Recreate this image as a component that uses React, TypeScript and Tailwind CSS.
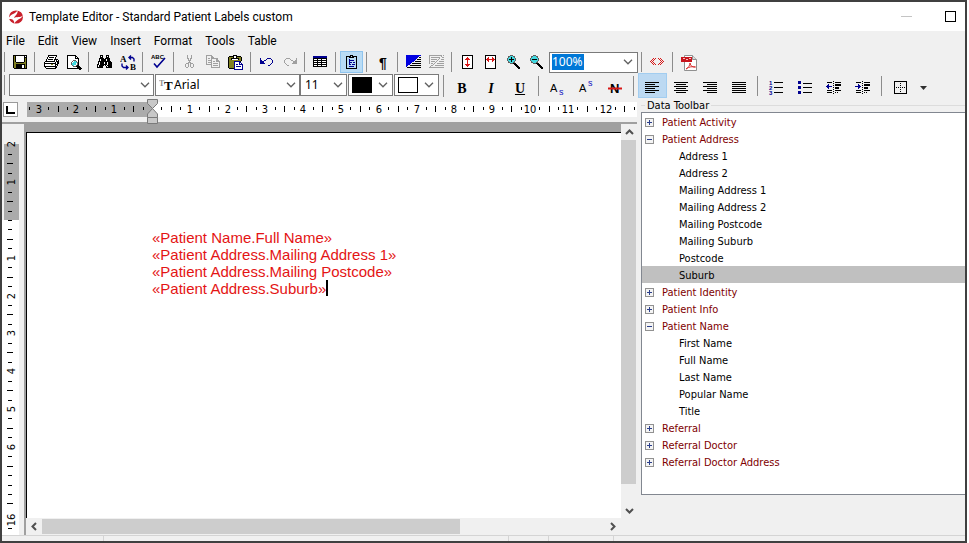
import { useState } from 'react';
import type { ReactNode } from 'react';

const palette: Record<string, string> = {
  k: '#000000',
  w: '#ffffff',
  g: '#a0a0a0',
  d: '#606060',
  n: '#000090',
  b: '#0000e0',
  o: '#808020',
  c: '#40d8e0',
  r: '#d81818',
};

// Small bitmap icons, one character per pixel
const bitmaps = {
  save: [
    '.kkkkkkkkkkkkkk.',
    '.kokwwwwwwwwkwk.',
    '.kokwwwwwwwwkkk.',
    '.kokwwwwwwwwkok.',
    '.kokwwwwwwwwkok.',
    '.kokwwwwwwwwkok.',
    '.kokwwwwwwwwkok.',
    '.kookkkkkkkkook.',
    '.kooooooooooook.',
    '.kookkkkkkkkkok.',
    '.kookkkkkkwwkok.',
    '.kookkkkkkwwkok.',
    '.kookkkkkkwwkok.',
    '..kkkkkkkkkkkkk.',
  ],
  print: [
    '.....kkkkkkkkk..',
    '.....kwwwwwwwk..',
    '....kwkkkkkwk...',
    '....kwwwwwwwk...',
    '...kwkkkkkwkkkk.',
    '...kwwwwwwwkwkwk',
    '..kkkkkkkkkkwkkk',
    '.kwwwwwwwwwwkwkk',
    '.kkkkkkkkkkkkwkk',
    '.kwwwwwwoowwkkk.',
    '.kwwwwwwwwwwkwk.',
    '.kkkkkkkkkkkkk..',
    '..kwwwwwwwwwkk..',
    '...kkkkkkkkkk...',
  ],
  preview: [
    '.kkkkkkkkk......',
    '.kwwwwwwwkk.....',
    '.kwwwwwwwkwk....',
    '.kwwwwwwwkkkk...',
    '.kwwwwwwwwwwk...',
    '.kwwwwwdddwwk...',
    '.kwwwwdwccdwk...',
    '.kwwwdwccccdk...',
    '.kwwwdccccwdk...',
    '.kwwwdccccwdk...',
    '.kwwwwdcwwdkk...',
    '.kwwwwwdddkkkk..',
    '.kwwwwwwwwwkkkk.',
    '.kkkkkkkkkkkkkkk',
    '.............kk.',
  ],
  find: [
    '...kkk...kkk....',
    '...kwk...kwk....',
    '...kkk...kkk....',
    '..kkkkk.kkkkk...',
    '..kwkkkkkwkkk...',
    '..kwkkkkkwkkk...',
    '.kkkkkkkkkkkkk..',
    '.kwkkkkwkkwkkkk.',
    '.kwkkkkwkkwkkkk.',
    'kkwkkkkkkkwkkkk.',
    'kwkkkkk.kwkkkkk.',
    'kwkkkk...kwkkkk.',
    'kkkkkk...kkkkkk.',
  ],
  cut: [
    '.....g...g......',
    '.....g...g......',
    '.....g...g......',
    '.....gg.gg......',
    '......g.g.......',
    '......ggg.......',
    '.......g........',
    '......ggg.......',
    '....ggg.ggg.....',
    '...g..g.g..g....',
    '...g..g.g..g....',
    '...g..g.g..g....',
    '....gg...gg.....',
  ],
  copy: [
    '.gggggg.........',
    '.g....gg........',
    '.g....ggg.......',
    '.g.gg.ggggggg...',
    '.g....g....gg...',
    '.g.gggg....ggg..',
    '.g....g.gg.gggg.',
    '.g.gggg.......g.',
    '.g....g.ggggg.g.',
    '.gggggg.......g.',
    '......g.ggggg.g.',
    '......g.......g.',
    '......ggggggggg.',
  ],
  paste: [
    '.....kkkk.......',
    '.kkkkkwwkkkkk...',
    'kooookwwkooook..',
    'kookkkkkkkkook..',
    'kookwwwwwwkook..',
    'kooooooooooook..',
    'kooooonnnnnnk...',
    'kooooonwwwwnn...',
    'kooooonwwwwnwn..',
    'kooooonwnnwnnnn.',
    'kooooonwwwwwwwn.',
    'kooooonwnnnnnwn.',
    'kooooonwwwwwwwn.',
    '.kkkkknwwwwwwwn.',
    '......nnnnnnnnn.',
  ],
  undo: [
    '................',
    '................',
    '................',
    '.n......nnnn....',
    '.n.....n....n...',
    '.nn..nn......n..',
    '.nnnn........n..',
    '.nnnn........n..',
    '.nnnnn......n...',
    '...........n....',
    '.........nn.....',
  ],
  redo: [
    '................',
    '................',
    '................',
    '....gggg......g.',
    '...g....g.....g.',
    '..g......gg..gg.',
    '..g........gggg.',
    '..g........gggg.',
    '...g......ggggg.',
    '....g...........',
    '.....gg.........',
  ],
  table: [
    '................',
    'nnnnnnnnnnnnnn..',
    'nnnnnnnnnnnnnn..',
    'kkkkkkkkkkkkkk..',
    'kwwwkwwwkwwwwk..',
    'kkkkkkkkkkkkkk..',
    'kwwwkwwwkwwwwk..',
    'kkkkkkkkkkkkkk..',
    'kwwwkwwwkwwwwk..',
    'kkkkkkkkkkkkkk..',
    'kwwwkwwwkwwwwk..',
    'kkkkkkkkkkkkkk..',
  ],
  fields: [
    '......kkk.......',
    '..kkkkk.kkkkk...',
    '..k..kkkkk..k...',
    '..k.........k...',
    '..k..n......k...',
    '..k..nnnnn..k...',
    '..k..n......k...',
    '..k..nnn.nn.k...',
    '..k..n......k...',
    '..k..nn.nnn.k...',
    '..k.........k...',
    '..k..nnnnn..k...',
    '..k.........k...',
    '..kkkkkkkkkkk...',
  ],
  shade: [
    'bbbbbbbbbbbbbbb.',
    'bbbbbbbbbbbbb...',
    'bbbbbbbbbbbb.kk.',
    'bbbbbbbbbbb.....',
    'bbbbbbbbbb.kkkk.',
    'bbbbbbbbb.......',
    'bbbbbbbb.kkkkkk.',
    'bbbbbb..........',
    'bbbbb.kkkkkkkkk.',
    'bbbb............',
    'bb..kkkkkkkkkkk.',
    'b...............',
    '.kkkkkkkkkkkkkk.',
  ],
  shadeOff: [
    'ggggggggggggg.g.',
    'g...........g...',
    'g.ggggggggg..gg.',
    'g.........g.....',
    'g.gggggg.g..ggg.',
    'g.......g.......',
    'g.gggg.g..ggggg.',
    'g.....g.........',
    'g.gg.g..ggggggg.',
    '....g...........',
    '..gg..ggggggggg.',
    '.g..............',
    'ggggggggggggggg.',
  ],
  fitHeight: [
    '..kkkkkkkkkkk...',
    '..kwwwwwwwwwk...',
    '..kwwwwrwwwwk...',
    '..kwwwrrrwwwk...',
    '..kwwrrrrrwwk...',
    '..kwwwwrwwwwk...',
    '..kwwwwrwwwwk...',
    '..kwwwwrwwwwk...',
    '..kwwwwrwwwwk...',
    '..kwwrrrrrwwk...',
    '..kwwwrrrwwwk...',
    '..kwwwwrwwwwk...',
    '..kwwwwwwwwwk...',
    '..kkkkkkkkkkk...',
  ],
  fitWidth: [
    '..kkkkkkkkkkk...',
    '..kwwwwwwwwwk...',
    '..kwwrwwwrwwk...',
    '..kwrrwwwrrwk...',
    '..krrrrrrrrrk...',
    '..kwrrwwwrrwk...',
    '..kwwrwwwrwwk...',
    '..kwwwwwwwwwk...',
    '..kwwwwwwwwwk...',
    '..kwwwwwwwwwk...',
    '..kwwwwwwwwwk...',
    '..kwwwwwwwwwk...',
    '..kwwwwwwwwwk...',
    '..kkkkkkkkkkk...',
  ],
  zoomIn: [
    '....ddd.........',
    '..ddcccdd.......',
    '..dcckccd.......',
    '.dccckcccd......',
    '.dckkkkkcd......',
    '.dccckcccd......',
    '..dcckccd.......',
    '..ddcccdd.......',
    '....dddkkk......',
    '........kkk.....',
    '.........kkk....',
    '..........kkk...',
    '...........kkk..',
    '............kk..',
  ],
  zoomOut: [
    '....ddd.........',
    '..ddcccdd.......',
    '..dcccccd.......',
    '.dcccccccd......',
    '.dckkkkkcd......',
    '.dcccccccd......',
    '..dcccccd.......',
    '..ddcccdd.......',
    '....dddkkk......',
    '........kkk.....',
    '.........kkk....',
    '..........kkk...',
    '...........kkk..',
    '............kk..',
  ],
  brackets: [
    '................',
    '................',
    '................',
    '...r.r..r.r.....',
    '..r.r....r.r....',
    '.r.r......r.r...',
    'r.r........r.r..',
    '.r.r......r.r...',
    '..r.r....r.r....',
    '...r.r..r.r.....',
  ],
  alignLeft: [
    '................',
    '.kkkkkkkkkkkkkk.',
    '................',
    '.kkkkkkkkkk.....',
    '................',
    '.kkkkkkkkkkkkkk.',
    '................',
    '.kkkkkkkkkk.....',
    '................',
    '.kkkkkkkkkkkkkk.',
    '................',
    '.kkkkkkkkkk.....',
  ],
  alignCenter: [
    '................',
    '.kkkkkkkkkkkkkk.',
    '................',
    '...kkkkkkkkkk...',
    '................',
    '.kkkkkkkkkkkkkk.',
    '................',
    '...kkkkkkkkkk...',
    '................',
    '.kkkkkkkkkkkkkk.',
    '................',
    '...kkkkkkkkkk...',
  ],
  alignRight: [
    '................',
    '.kkkkkkkkkkkkkk.',
    '................',
    '.....kkkkkkkkkk.',
    '................',
    '.kkkkkkkkkkkkkk.',
    '................',
    '.....kkkkkkkkkk.',
    '................',
    '.kkkkkkkkkkkkkk.',
    '................',
    '.....kkkkkkkkkk.',
  ],
  justify: [
    '................',
    '.kkkkkkkkkkkkkk.',
    '................',
    '.kkkkkkkkkkkkkk.',
    '................',
    '.kkkkkkkkkkkkkk.',
    '................',
    '.kkkkkkkkkkkkkk.',
    '................',
    '.kkkkkkkkkkkkkk.',
    '................',
    '.kkkkkkkkkkkkkk.',
  ],
  bullets: [
    '.nnn............',
    '.nnn............',
    '.nnn..kkkkkkkkk.',
    '................',
    '................',
    '.nnn............',
    '.nnn..kkkkkkkkk.',
    '.nnn............',
    '................',
    '................',
    '.nnn............',
    '.nnn..kkkkkkkkk.',
    '.nnn............',
  ],
  outdent: [
    '.......k........',
    '.kkkkk...kkkkkk.',
    '.......k........',
    '..n......kkkkkk.',
    '.nn....k.kkkkkk.',
    'nnnnnn..........',
    '.nn....k.kkkk...',
    '..n......kkkk...',
    '.......k........',
    '.kkkkk...kkkkkk.',
    '.......k........',
    '.kkkkk...k.k....',
    '.......k........',
  ],
  indent: [
    '.......k........',
    '.kkkkk...kkkkkk.',
    '.......k........',
    '...n.....kkkkkk.',
    '...nn..k.kkkkkk.',
    'nnnnnn..........',
    '...nn..k.kkkk...',
    '...n.....kkkk...',
    '.......k........',
    '.kkkkk...kkkkkk.',
    '.......k........',
    '.kkkkk...k.k....',
    '.......k........',
  ],
  borders: [
    '..kkkkkkkkkkkkk.',
    '..k...........k.',
    '..k.....k.....k.',
    '..k...........k.',
    '..k.....k.....k.',
    '..k...........k.',
    '..k.k.k.k.k.k.k.',
    '..k...........k.',
    '..k.....k.....k.',
    '..k...........k.',
    '..k.....k.....k.',
    '..k...........k.',
    '..kkkkkkkkkkkkk.',
  ],
};

function Bitmap({ name }: { name: keyof typeof bitmaps }) {
  const rects: ReactNode[] = [];
  bitmaps[name].forEach((row, y) => {
    let x = 0;
    while (x < row.length) {
      let end = x + 1;
      while (end < row.length && row[end] === row[x]) end++;
      if (row[x] !== '.') {
        rects.push(<rect key={`${x}-${y}`} x={x} y={y} width={end - x} height={1} fill={palette[row[x]]} />);
      }
      x = end;
    }
  });
  return (
    <svg className="h-4 w-4 shrink-0" viewBox="0 0 16 16" shapeRendering="crispEdges" aria-hidden="true">
      {rects}
    </svg>
  );
}

function Chevron() {
  return (
    <svg className="h-[6px] w-[10px] shrink-0" viewBox="0 0 10 6" fill="none" stroke="#606060" strokeWidth="1.3" aria-hidden="true">
      <path d="M1 .8 5 4.8 9 .8" />
    </svg>
  );
}

function Separator() {
  return <span className="ml-[3px] mr-1 h-5 w-px shrink-0 bg-[#8c8c8c]" />;
}

function ToolButton({ label, active, children }: { label: string; active?: boolean; children: ReactNode }) {
  return (
    <button
      type="button"
      aria-label={label}
      aria-pressed={active}
      className={`flex h-[22px] w-[23px] shrink-0 items-center pl-1 pt-[2px] ${active ? 'bg-[#b9dcf5] outline -outline-offset-1 outline-[#8fc4ee]' : 'hover:bg-[#dcecf8]'}`}
    >
      {children}
    </button>
  );
}

function FormatButton({ label, active, children }: { label: string; active?: boolean; children: ReactNode }) {
  return (
    <button
      type="button"
      aria-label={label}
      aria-pressed={active}
      className={`flex h-[25px] w-[29px] shrink-0 items-center pl-[6px] pt-[7px] ${active ? 'bg-[#bcd9f2] outline -outline-offset-1 outline-[#a2cdf0]' : 'hover:bg-[#dcecf8]'}`}
    >
      {children}
    </button>
  );
}

function Combo({ label, value, className, pad }: { label: string; value: string; className: string; pad?: string }) {
  return (
    <span className={`relative flex h-[22px] shrink-0 items-center ${className}`}>
      <select
        aria-label={label}
        defaultValue={value}
        className={`h-full w-full appearance-none border border-[#7a7a7a] bg-white font-['Noto_Sans'] text-xs leading-4 ${pad ?? 'pl-1'}`}
      >
        <option>{value}</option>
      </select>
      <span className="pointer-events-none absolute right-1">
        <Chevron />
      </span>
    </span>
  );
}

function ColourCombo({ label, swatch }: { label: string; swatch: string }) {
  return (
    <button
      type="button"
      aria-label={label}
      aria-haspopup="listbox"
      className="flex h-[22px] w-[45px] shrink-0 items-center justify-between border border-[#7a7a7a] bg-white pl-[3px] pr-1"
    >
      <span className={`h-4 w-5 ${swatch}`} />
      <Chevron />
    </button>
  );
}

function TitleBar() {
  return (
    <header className="flex h-[29px] shrink-0 items-center bg-white pl-[7px] pr-[9px]">
      <svg className="h-[14px] w-[14px]" viewBox="0 0 14 14" aria-hidden="true">
        <ellipse cx="7" cy="7" rx="7" ry="6.600" fill="#c9202b" />
        <path d="M0 7.500C2.500 3.500 5.500 4.800 8.600.6 9 4.500 6 5.400 5 8 7.500 6.500 11 7.800 14 5.500 12 9.500 8.500 8.500 5.400 13.400 5.200 9.200 2.500 9 0 9Z" fill="#fff" />
      </svg>
      <h1 className="ml-[6px] flex-1 font-['Roboto'] text-xs leading-4">Template Editor - Standard Patient Labels custom</h1>
      <button type="button" aria-label="Minimise" className="flex h-4 w-5 items-center">
        <span className="h-px w-[11px] bg-[#c4c4c4]" />
      </button>
      <button type="button" aria-label="Maximise" className="ml-6 h-[11px] w-[11px] border border-black" />
    </header>
  );
}

const menus = ['File', 'Edit', 'View', 'Insert', 'Format', 'Tools', 'Table'];

function MenuBar() {
  return (
    <nav className="flex h-5 shrink-0 items-center gap-[13px] pl-1 font-['Roboto'] text-xs leading-4">
      {menus.map((menu) => (
        <button key={menu} type="button">
          {menu}
        </button>
      ))}
    </nav>
  );
}

function StandardToolbar() {
  return (
    <div role="toolbar" aria-label="Standard" className="flex h-[22px] shrink-0 items-center">
      <span className="ml-[2px] mr-[3px] h-5 w-px bg-[#8c8c8c]" />
      <ToolButton label="Save"><Bitmap name="save" /></ToolButton>
      <Separator />
      <ToolButton label="Print"><Bitmap name="print" /></ToolButton>
      <ToolButton label="Print preview"><Bitmap name="preview" /></ToolButton>
      <Separator />
      <ToolButton label="Find"><Bitmap name="find" /></ToolButton>
      <ToolButton label="Replace">
        <svg className="h-4 w-4" viewBox="0 0 16 16" aria-hidden="true">
          <text x="0" y="7" fontFamily="Liberation Serif" fontSize="9" fontWeight="bold">A</text>
          <text x="10" y="15" fontFamily="Liberation Serif" fontSize="9" fontWeight="bold">B</text>
          <path d="M14 6.500V4L12.500 2.500H9M11 .5 9 2.500l2 2M2 8.500V11l1.500 1.500H8M6 10.500l2 2-2 2" fill="none" stroke="#000090" strokeWidth="1.4" />
        </svg>
      </ToolButton>
      <Separator />
      <ToolButton label="Spelling">
        <svg className="h-4 w-4 overflow-visible" viewBox="0 0 16 16" aria-hidden="true">
          <text x="0" y="4" fontFamily="Liberation Sans" fontSize="6" fontWeight="bold">ABC</text>
          <path d="M3 8.500 6 12 14 3" fill="none" stroke="#000090" strokeWidth="1.6" />
        </svg>
      </ToolButton>
      <Separator />
      <ToolButton label="Cut"><Bitmap name="cut" /></ToolButton>
      <ToolButton label="Copy"><Bitmap name="copy" /></ToolButton>
      <ToolButton label="Paste"><Bitmap name="paste" /></ToolButton>
      <Separator />
      <ToolButton label="Undo"><Bitmap name="undo" /></ToolButton>
      <ToolButton label="Redo"><Bitmap name="redo" /></ToolButton>
      <Separator />
      <ToolButton label="Insert table"><Bitmap name="table" /></ToolButton>
      <Separator />
      <ToolButton label="Data toolbar" active><Bitmap name="fields" /></ToolButton>
      <Separator />
      <ToolButton label="Show paragraph marks">
        <span className="w-4 text-center font-['Liberation_Sans'] text-sm leading-4 font-bold">¶</span>
      </ToolButton>
      <Separator />
      <ToolButton label="Show shading"><Bitmap name="shade" /></ToolButton>
      <ToolButton label="Hide shading"><Bitmap name="shadeOff" /></ToolButton>
      <Separator />
      <ToolButton label="Fit page height"><Bitmap name="fitHeight" /></ToolButton>
      <ToolButton label="Fit page width"><Bitmap name="fitWidth" /></ToolButton>
      <ToolButton label="Zoom in"><Bitmap name="zoomIn" /></ToolButton>
      <ToolButton label="Zoom out"><Bitmap name="zoomOut" /></ToolButton>
      <span className="ml-px flex h-[21px] w-[89px] shrink-0 items-center justify-between border border-[#7a7a7a] bg-white pl-[2px] pr-1">
        <input
          aria-label="Zoom level"
          defaultValue="100%"
          className="h-4 w-8 bg-[#0078d7] font-['Noto_Sans'] text-xs leading-4 text-white"
        />
        <button type="button" aria-label="Zoom levels" className="flex h-4 items-center">
          <Chevron />
        </button>
      </span>
      <Separator />
      <ToolButton label="Insert field"><Bitmap name="brackets" /></ToolButton>
      <Separator />
      <ToolButton label="Export to PDF">
        <svg className="h-4 w-4" viewBox="0 0 16 16" aria-hidden="true">
          <path d="M3.500.5h8l4 4v11h-12Z" fill="#fff" stroke="#909090" />
          <path d="M11.500.5v4h4" fill="#ddd" stroke="#909090" />
          <path d="M0 2h11v5H0Z" fill="#c8141c" />
          <path d="M2 3.500h2M5 4.500h2M8 3.500h2" stroke="#f4c0c0" />
          <path d="M5 14c2-1 4-3.500 4-6 .5 3 2.500 4.500 5.500 4-3-.8-6.500-.3-9.500 2Z" fill="none" stroke="#d83030" />
        </svg>
      </ToolButton>
    </div>
  );
}

function FormatToolbar() {
  return (
    <div role="toolbar" aria-label="Formatting" className="flex h-[25px] shrink-0 items-start">
      <span className="mt-[2px] ml-[2px] mr-1 h-5 w-px shrink-0 bg-[#8c8c8c]" />
      <div className="flex shrink-0 pt-px">
        <Combo label="Style" value="" className="mr-px w-[145px]" />
        <span className="relative flex shrink-0">
          <Combo label="Font" value="Arial" className="w-[145px]" pad="pl-[18px]" />
          <svg className="pointer-events-none absolute left-1 top-1 h-[14px] w-[14px]" viewBox="0 0 14 14" aria-hidden="true">
            <text x="0" y="8" fontFamily="Liberation Serif" fontSize="8" fontWeight="bold" fill="#909090">T</text>
            <text x="5" y="12" fontFamily="Liberation Serif" fontSize="13" fontWeight="bold">T</text>
          </svg>
        </span>
        <Combo label="Font size" value="11" className="mr-px w-[47px]" />
        <ColourCombo label="Text colour" swatch="bg-black" />
        <span className="w-px shrink-0" />
        <ColourCombo label="Highlight colour" swatch="border border-black bg-white" />
      </div>
      <span className="mt-[2px] ml-1 mr-1 h-[22px] w-px shrink-0 bg-[#8c8c8c]" />
      <FormatButton label="Bold">
        <b className="w-4 font-['Liberation_Serif'] text-sm leading-4">B</b>
      </FormatButton>
      <FormatButton label="Italic">
        <i className="w-4 font-['Liberation_Serif'] text-sm leading-4 font-bold">I</i>
      </FormatButton>
      <FormatButton label="Underline">
        <u className="w-4 font-['Liberation_Serif'] text-sm leading-4 font-bold">U</u>
      </FormatButton>
      <span className="flex self-center"><Separator /></span>
      <FormatButton label="Subscript">
        <svg className="h-4 w-4 overflow-visible" viewBox="0 0 16 16" aria-hidden="true">
          <text x="1" y="11" fontFamily="Liberation Sans" fontSize="11">A</text>
          <text x="10" y="14" fontFamily="Liberation Sans" fontSize="9" fill="#1010c0">s</text>
        </svg>
      </FormatButton>
      <FormatButton label="Superscript">
        <svg className="h-4 w-4 overflow-visible" viewBox="0 0 16 16" aria-hidden="true">
          <text x="1" y="11" fontFamily="Liberation Sans" fontSize="11">A</text>
          <text x="10" y="5" fontFamily="Liberation Sans" fontSize="9" fill="#1010c0">s</text>
        </svg>
      </FormatButton>
      <FormatButton label="Clear formatting">
        <svg className="h-4 w-4" viewBox="0 0 16 16" aria-hidden="true">
          <text x="3" y="12" fontFamily="Liberation Sans" fontSize="13" fontWeight="bold">N</text>
          <path d="M1 7.500h14" stroke="#d81818" strokeWidth="2" />
        </svg>
      </FormatButton>
      <span className="flex self-center"><Separator /></span>
      <FormatButton label="Align left" active><Bitmap name="alignLeft" /></FormatButton>
      <FormatButton label="Centre"><Bitmap name="alignCenter" /></FormatButton>
      <FormatButton label="Align right"><Bitmap name="alignRight" /></FormatButton>
      <FormatButton label="Justify"><Bitmap name="justify" /></FormatButton>
      <span className="flex self-center"><Separator /></span>
      <FormatButton label="Numbered list">
        <svg className="h-4 w-4 overflow-visible" viewBox="0 0 16 16" aria-hidden="true">
          <g fontFamily="Liberation Sans" fontSize="6" fontWeight="bold" fill="#000090">
            <text x="1" y="4">1</text>
            <text x="1" y="9">2</text>
            <text x="1" y="14">3</text>
          </g>
          <path d="M6 1.500h9M6 6.500h9M6 11.500h9" stroke="#000" />
        </svg>
      </FormatButton>
      <FormatButton label="Bulleted list"><Bitmap name="bullets" /></FormatButton>
      <FormatButton label="Decrease indent"><Bitmap name="outdent" /></FormatButton>
      <FormatButton label="Increase indent"><Bitmap name="indent" /></FormatButton>
      <span className="flex self-center"><Separator /></span>
      <FormatButton label="Borders"><Bitmap name="borders" /></FormatButton>
      <button type="button" aria-label="Border options" className="flex h-[25px] w-4 items-center justify-center pt-[5px]">
        <svg className="h-1 w-[7px]" viewBox="0 0 7 4" aria-hidden="true">
          <path d="M0 0h7L3.500 4Z" fill="#303030" />
        </svg>
      </button>
    </div>
  );
}

const CM = 96 / 2.54;

function HorizontalRuler() {
  const zero = 125;
  const ticks: ReactNode[] = [];
  for (let q = -13; q <= 51; q++) {
    const x = Math.round(zero + (q * CM) / 4);
    if (q === 0) continue;
    if (q % 4 === 0) {
      ticks.push(
        <text key={q} x={x} y={11} textAnchor="middle">
          {Math.abs(q / 4)}
        </text>,
      );
    } else {
      const tall = q % 2 === 0;
      ticks.push(<rect key={q} x={x} y={tall ? 4 : 5} width={1} height={tall ? 6 : 3} />);
    }
  }
  return (
    <svg className="h-[15px] min-w-0 flex-1 bg-white font-['DejaVu_Sans_Condensed'] text-[11px]" aria-label="Horizontal ruler">
      <rect width={zero} height="15" fill="#ababab" />
      {ticks}
    </svg>
  );
}

function VerticalRuler() {
  const zero = 96;
  const ticks: ReactNode[] = [];
  for (let q = -8; q <= 31; q++) {
    const y = Math.round(zero + (q * CM) / 4);
    if (q % 4 === 0 && q !== 0 && q !== 28) {
      ticks.push(
        <text key={q} transform={`translate(13 ${y}) rotate(-90)`} textAnchor="middle">
          {Math.abs(q / 4)}
        </text>,
      );
    } else if (q < 31) {
      const tall = q % 2 === 0 && q % 4 !== 0;
      ticks.push(<rect key={q} x={tall ? 5 : 6} y={y} width={tall ? 6 : 4} height={1} />);
    }
  }
  return (
    <svg className="h-full w-[17px] shrink-0 font-['DejaVu_Sans_Condensed'] text-[11px]" aria-label="Vertical ruler">
      <rect y={zero} width="17" height="100%" fill="#fff" />
      <rect x="2" y="20" width="15" height={zero - 20} fill="#ababab" />
      {ticks}
      <text transform="translate(13 396) rotate(-90)" textAnchor="middle">16</text>
      <rect x="6" y="404" width="4" height="1" />
    </svg>
  );
}

const arrows = {
  up: 'M1 6 4.500 2.500 8 6',
  down: 'M1 3 4.500 6.500 8 3',
  left: 'M6 1 2.500 4.500 6 8',
  right: 'M3 1 6.500 4.500 3 8',
};

function ScrollArrow({ to }: { to: keyof typeof arrows }) {
  return (
    <button type="button" aria-label={`Scroll ${to}`} className="flex h-4 w-4 shrink-0 items-center justify-center bg-[#f0f0f0]">
      <svg className="h-[9px] w-[9px]" viewBox="0 0 9 9" fill="none" stroke="#505050" strokeWidth="2" aria-hidden="true">
        <path d={arrows[to]} />
      </svg>
    </button>
  );
}

const lines = [
  '«Patient Name.Full Name»',
  '«Patient Address.Mailing Address 1»',
  '«Patient Address.Mailing Postcode»',
  '«Patient Address.Suburb»',
];

function Editor() {
  return (
    <section className="flex min-w-0 flex-1 flex-col">
      <div className="relative flex h-6 shrink-0 items-start pl-px pt-1">
        <button type="button" aria-label="Tab type" className="flex h-[15px] w-[15px] items-center justify-center border border-[#9a9a9a] bg-white">
          <span className="h-2 w-[9px] border-b-2 border-l-2 border-black" />
        </button>
        <span className="w-[9px]" />
        <HorizontalRuler />
        {/* Indent markers sit over the ruler */}
        <svg className="absolute left-[145px] top-px h-[25px] w-[11px]" viewBox="0 0 11 25" fill="#c8c8c8" stroke="#7a7a7a" aria-hidden="true">
          <path d="M.5.5h10v4L5.500 9.500.5 4.500Z" />
          <path d="M5.500 9.500 10.500 15v3.500H.5V15Z" />
          <path d="M.5 18.500h10v6H.5Z" />
        </svg>
      </div>
      <div className="h-[2px] shrink-0 bg-[#a0a0a0]" />
      <div className="flex min-h-0 flex-1">
        <VerticalRuler />
        <div className="ml-[5px] flex min-w-0 flex-1 flex-col border-l-2 border-[#a0a0a0]">
          <div className="flex min-h-0 flex-1">
            <div className="flex min-w-0 flex-1 flex-col bg-[#a0a0a0] pt-2">
              <div
                role="textbox"
                aria-multiline="true"
                aria-label="Document"
                className="flex-1 border-l border-t border-black bg-white pl-[125px] pt-24 font-['Liberation_Sans'] text-[15px] leading-[17px] text-[#e41414]"
              >
                {lines.map((line, i) => (
                  <p key={line} className="flex whitespace-pre">
                    {line}
                    {i === lines.length - 1 && <span className="h-4 w-[2px] bg-black" />}
                  </p>
                ))}
              </div>
            </div>
            <div className="flex w-4 shrink-0 flex-col bg-[#f0f0f0]">
              <ScrollArrow to="up" />
              <span className="w-[15px] flex-[343] bg-[#cdcdcd]" />
              <span className="flex-[18]" />
              <ScrollArrow to="down" />
            </div>
          </div>
          <div className="flex h-[17px] shrink-0 items-center bg-[#f0f0f0] pr-[17px]">
            <ScrollArrow to="left" />
            <span className="h-[15px] flex-[417] bg-[#cdcdcd]" />
            <span className="flex-[144]" />
            <ScrollArrow to="right" />
          </div>
        </div>
      </div>
    </section>
  );
}

const tree = [
  { name: 'Patient Activity', fields: [] },
  {
    name: 'Patient Address',
    fields: [
      'Address 1',
      'Address 2',
      'Mailing Address 1',
      'Mailing Address 2',
      'Mailing Postcode',
      'Mailing Suburb',
      'Postcode',
      'Suburb',
    ],
  },
  { name: 'Patient Identity', fields: [] },
  { name: 'Patient Info', fields: [] },
  { name: 'Patient Name', fields: ['First Name', 'Full Name', 'Last Name', 'Popular Name', 'Title'] },
  { name: 'Referral', fields: [] },
  { name: 'Referral Doctor', fields: [] },
  { name: 'Referral Doctor Address', fields: [] },
];

function DataToolbar() {
  const [selected, setSelected] = useState('Suburb');

  return (
    <fieldset className="ml-1 mb-10 flex w-[324px] shrink-0 flex-col border-t border-[#dcdcdc] font-['DejaVu_Sans_Condensed'] text-[11px]">
      <legend className="ml-1 h-[14px] px-[2px] leading-4">Data Toolbar</legend>
      <ul role="tree" className="h-full border border-r-0 border-[#828790] bg-white">
        {tree.map((group) => (
          <li key={group.name} role="treeitem" aria-expanded={group.fields.length > 0}>
            <button type="button" className="flex h-[17px] w-full items-center pl-[3px] pt-[2px] leading-[17px] text-[#800000]">
              <svg className="mr-2 h-[9px] w-[9px]" viewBox="0 0 9 9" shapeRendering="crispEdges" aria-hidden="true">
                <rect x=".5" y=".5" width="8" height="8" fill="#f4f4f4" stroke="#919191" />
                <path d={group.fields.length ? 'M2 4.500h5' : 'M2 4.500h5M4.500 2v5'} stroke="#2b3f8c" />
              </svg>
              {group.name}
            </button>
            {group.fields.length > 0 && (
              <ul role="group">
                {group.fields.map((field) => (
                  <li key={field} role="treeitem" aria-selected={selected === field}>
                    <button
                      type="button"
                      onClick={() => setSelected(field)}
                      className={`flex h-[17px] w-full items-center pl-[37px] pt-[2px] leading-[17px] ${selected === field ? 'bg-[#c0c0c0]' : ''}`}
                    >
                      {field}
                    </button>
                  </li>
                ))}
              </ul>
            )}
          </li>
        ))}
      </ul>
    </fieldset>
  );
}

export default function App() {
  return (
    <div className="h-screen w-full bg-white pr-[2px]">
      <div className="flex h-full flex-col overflow-hidden border-2 border-[#404040] bg-[#f0f0f0] text-black">
        <TitleBar />
        <MenuBar />
        <StandardToolbar />
        <FormatToolbar />
        <main className="flex min-h-0 flex-1">
          <Editor />
          <DataToolbar />
        </main>
        <footer className="flex h-[6px] shrink-0 border-t border-[#d4d4d4]">
          <span className="w-[102px] border-r border-[#d4d4d4]" />
          <span className="w-[405px] border-r border-[#d4d4d4]" />
          <span className="w-10 border-r border-[#d4d4d4]" />
          <span className="w-[65px] border-r border-[#d4d4d4]" />
        </footer>
      </div>
    </div>
  );
}
